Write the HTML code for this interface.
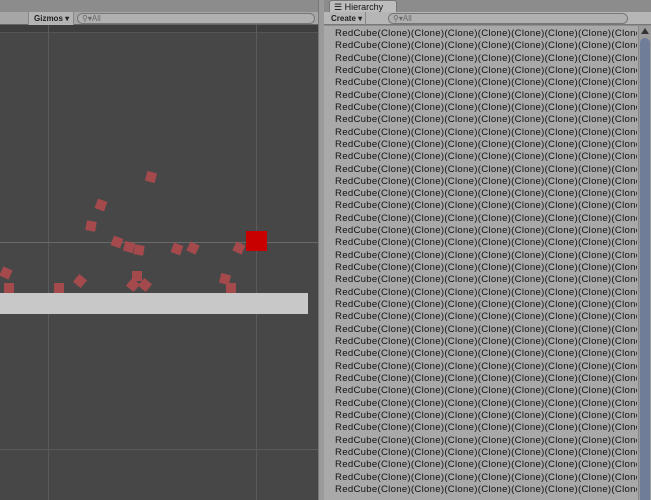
<!DOCTYPE html><html><head><style>
body{margin:0;width:651px;height:500px;overflow:hidden;background:#8e8e8e;position:relative;font-family:"Liberation Sans",sans-serif}
div{position:absolute;box-sizing:border-box}
.sq{width:10px;height:10px;background:#a44a4c}
.row{left:335px;width:302px;height:12.3px;font-size:9.6px;line-height:12px;color:#111;white-space:nowrap;overflow:hidden;letter-spacing:0.28px}
</style></head><body>
<div style="left:0;top:0;width:320px;height:12px;background:#8c8c8c"></div>
<div style="left:0;top:12px;width:320px;height:13px;background:#a6a6a6;border-bottom:1px solid #666"></div>
<div style="left:28px;top:12px;width:46px;height:13px;background:#b4b4b4;border-left:1px solid #888;border-right:1px solid #888;font-size:8px;font-weight:bold;line-height:13px;padding-left:5px;color:#222">Gizmos ▾</div>
<div style="left:77px;top:13px;width:238px;height:11px;border:1px solid #777;border-radius:6px;background:#b0b0b0;font-size:8px;line-height:9px;padding-left:4px;color:#666">⚲▾All</div>
<div style="left:0;top:25px;width:318px;height:475px;background:#474747"></div>
<div style="left:0;top:25px;width:318px;height:8px;background:#3e3e3e;border-bottom:1px solid #555"></div>
<div style="left:48px;top:25px;width:1px;height:475px;background:#5a5a5a"></div>
<div style="left:256px;top:25px;width:1px;height:475px;background:#5a5a5a"></div>
<div style="left:0;top:242px;width:318px;height:1px;background:#6a6a6a"></div>
<div style="left:0;top:449px;width:318px;height:1px;background:#5a5a5a"></div>
<div style="left:0;top:293px;width:308px;height:21px;background:#c8c8c8"></div>
<div class="sq" style="left:146px;top:172px;transform:rotate(15deg)"></div>
<div class="sq" style="left:96px;top:200px;transform:rotate(20deg)"></div>
<div class="sq" style="left:86px;top:221px;transform:rotate(10deg)"></div>
<div class="sq" style="left:112px;top:237px;transform:rotate(20deg)"></div>
<div class="sq" style="left:124px;top:242px;transform:rotate(15deg)"></div>
<div class="sq" style="left:134px;top:245px;transform:rotate(10deg)"></div>
<div class="sq" style="left:172px;top:244px;transform:rotate(20deg)"></div>
<div class="sq" style="left:188px;top:243px;transform:rotate(25deg)"></div>
<div class="sq" style="left:234px;top:243px;transform:rotate(25deg)"></div>
<div class="sq" style="left:1px;top:268px;transform:rotate(25deg)"></div>
<div class="sq" style="left:4px;top:283px"></div>
<div class="sq" style="left:54px;top:283px"></div>
<div class="sq" style="left:75px;top:276px;transform:rotate(40deg)"></div>
<div class="sq" style="left:132px;top:271px"></div>
<div class="sq" style="left:128px;top:280px;transform:rotate(40deg)"></div>
<div class="sq" style="left:140px;top:280px;transform:rotate(40deg)"></div>
<div class="sq" style="left:220px;top:274px;transform:rotate(15deg)"></div>
<div class="sq" style="left:226px;top:283px"></div>
<div style="left:246px;top:231px;width:21px;height:20px;background:#c80000"></div>
<div style="left:318px;top:0;width:6px;height:500px;background:#9a9a9a;border-left:1px solid #777"></div>
<div style="left:324px;top:0;width:327px;height:12px;background:#8c8c8c"></div>
<div style="left:329px;top:0;width:68px;height:13px;background:#bdbdbd;border:1px solid #777;border-bottom:none;border-radius:3px 3px 0 0;font-size:9px;line-height:12px;padding-left:4px;color:#111">☰ Hierarchy</div>
<div style="left:324px;top:12px;width:327px;height:13px;background:#b6b6b6;border-bottom:1px solid #777"></div>
<div style="left:328px;top:12px;width:38px;height:13px;border-right:1px solid #888;font-size:8px;font-weight:bold;line-height:13px;padding-left:3px;color:#222">Create ▾</div>
<div style="left:388px;top:13px;width:240px;height:11px;border:1px solid #777;border-radius:6px;background:#b0b0b0;font-size:8px;line-height:9px;padding-left:4px;color:#666">⚲▾All</div>
<div style="left:324px;top:26px;width:314px;height:474px;background:#a9a9a9"></div>
<div style="left:638px;top:26px;width:13px;height:474px;background:#9c9c9c;border-left:1px solid #888"></div>
<div style="left:641px;top:28px;width:0;height:0;border:4px solid transparent;border-bottom:6px solid #333;border-top:none"></div>
<div style="left:640px;top:38px;width:10px;height:462px;background:#6f7d98;border-radius:5px 5px 0 0"></div>
<div id="rows"></div>
<script>
var h='';for(var i=0;i<38;i++)h+='<div class="row" style="top:'+(28+i*12.32)+'px">RedCube(Clone)(Clone)(Clone)(Clone)(Clone)(Clone)(Clone)(Clone)</div>';
document.getElementById('rows').outerHTML=h;
</script>
</body></html>
